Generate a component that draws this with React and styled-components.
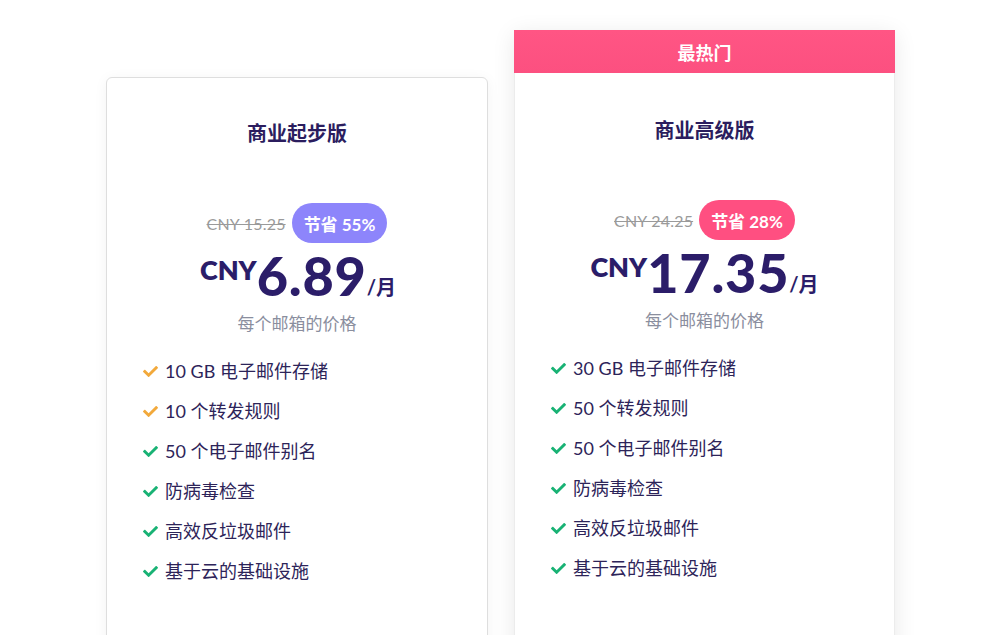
import React from "react";
import styled, { createGlobalStyle } from "styled-components";
import { FaCheck } from "react-icons/fa";

const GlobalStyle = createGlobalStyle`
  html, body {
    margin: 0;
    padding: 0;
    background: #ffffff;
    overflow: hidden;
  }
  body {
    font-family: "Lato", "Noto Sans CJK SC", sans-serif;
  }
`;

const Page = styled.div`
  display: flex;
  align-items: flex-start;
  gap: 26px;
  padding: 30px 0 0 106px;
  height: 605px;
  overflow: hidden;
`;

const Column = styled.div`
  width: ${(p) => p.$width}px;
  margin-top: ${(p) => (p.$popular ? 0 : 47)}px;
  box-shadow: ${(p) =>
    p.$popular ? "0 4px 22px rgba(0, 0, 0, 0.09)" : "0 2px 14px rgba(0, 0, 0, 0.05)"};
  border-radius: ${(p) => (p.$popular ? "0" : "6px")};
`;

const Banner = styled.div`
  height: 43px;
  display: flex;
  align-items: center;
  justify-content: center;
  background: linear-gradient(180deg, #ff5584 0%, #fc5080 100%);
  color: #fff;
  font-weight: 700;
  font-size: 18px;
  font-family: "Noto Sans CJK SC", sans-serif;
`;

const Card = styled.div`
  background: #fff;
  border: 1px solid ${(p) => (p.$popular ? "#ececec" : "#dedede")};
  border-top: ${(p) => (p.$popular ? "none" : "1px solid #dedede")};
  border-radius: ${(p) => (p.$popular ? "0" : "6px")};
  height: 640px;
  display: flex;
  flex-direction: column;
  align-items: center;
  padding-top: ${(p) => (p.$popular ? 42 : 40)}px;
  box-sizing: border-box;
`;

const Title = styled.h2`
  margin: 0;
  font-family: "Noto Sans CJK SC", sans-serif;
  font-size: 20px;
  font-weight: 700;
  color: #2b1d5e;
  line-height: 30px;
`;

const OldRow = styled.div`
  margin-top: 55px;
  display: flex;
  align-items: center;
  gap: 6px;
`;

const OldPrice = styled.span`
  font-size: 16px;
  color: #9a9a9a;
  text-decoration: line-through;
  letter-spacing: 0.2px;
`;

const Badge = styled.span`
  background: ${(p) => p.$color};
  color: #fff;
  font-weight: 700;
  font-size: 17px;
  height: 40px;
  padding: 0 12px;
  border-radius: 20px;
  display: inline-flex;
  align-items: center;
  font-family: "Lato", "Noto Sans CJK SC", sans-serif;
`;

const PriceRow = styled.div`
  display: flex;
  align-items: flex-end;
  color: #2b1d69;
  font-weight: 800;
  margin-top: 6px;
  margin-left: ${(p) => p.$shift}px;
`;

const Currency = styled.span`
  font-size: 27px;
  font-weight: 800;
  align-self: flex-start;
  line-height: 32px;
  margin-top: 5px;
`;

const Amount = styled.span`
  font-size: 54px;
  font-weight: 900;
  line-height: 54px;
  letter-spacing: 0.8px;
`;

const Per = styled.span`
  font-size: 20px;
  font-weight: 700;
  font-family: "Lato", "Noto Sans CJK SC", sans-serif;
  line-height: 24px;
  margin-bottom: 4px;
`;

const Caption = styled.div`
  margin-top: 7px;
  font-size: 17px;
  color: #8a8e9e;
  font-family: "Noto Sans CJK SC", sans-serif;
`;

const Features = styled.ul`
  list-style: none;
  margin: 24px 0 0;
  padding: 0 0 0 36px;
  align-self: stretch;
  display: flex;
  flex-direction: column;
  gap: 16px;
`;

const Feature = styled.li`
  display: flex;
  align-items: center;
  gap: 7px;
  font-size: 18px;
  line-height: 24px;
  color: #2d2459;
  font-family: "Lato", "Noto Sans CJK SC", sans-serif;

  svg {
    color: ${(p) => (p.$warn ? "#f2a93b" : "#18b274")};
    width: 15px;
    height: 15px;
    flex-shrink: 0;
  }
`;

const plans = [
  {
    name: "商业起步版",
    old: "CNY 15.25",
    save: "节省 55%",
    badge: "#8d85fb",
    amount: "6.89",
    width: 382,
    shift: 2,
    features: [
      { text: "10 GB 电子邮件存储", warn: true },
      { text: "10 个转发规则", warn: true },
      { text: "50 个电子邮件别名" },
      { text: "防病毒检查" },
      { text: "高效反垃圾邮件" },
      { text: "基于云的基础设施" },
    ],
  },
  {
    name: "商业高级版",
    old: "CNY 24.25",
    save: "节省 28%",
    badge: "#ff4f81",
    amount: "17.35",
    width: 381,
    shift: 0,
    popular: true,
    features: [
      { text: "30 GB 电子邮件存储" },
      { text: "50 个转发规则" },
      { text: "50 个电子邮件别名" },
      { text: "防病毒检查" },
      { text: "高效反垃圾邮件" },
      { text: "基于云的基础设施" },
    ],
  },
];

export default function App() {
  return (
    <>
      <GlobalStyle />
      <Page>
        {plans.map((plan) => (
          <Column key={plan.name} $width={plan.width} $popular={plan.popular}>
            {plan.popular && <Banner>最热门</Banner>}
            <Card $popular={plan.popular}>
              <Title>{plan.name}</Title>
              <OldRow>
                <OldPrice>{plan.old}</OldPrice>
                <Badge $color={plan.badge}>{plan.save}</Badge>
              </OldRow>
              <PriceRow $shift={plan.shift}>
                <Currency>CNY</Currency>
                <Amount>{plan.amount}</Amount>
                <Per>/月</Per>
              </PriceRow>
              <Caption>每个邮箱的价格</Caption>
              <Features>
                {plan.features.map((f) => (
                  <Feature key={f.text} $warn={f.warn}>
                    <FaCheck />
                    {f.text}
                  </Feature>
                ))}
              </Features>
            </Card>
          </Column>
        ))}
      </Page>
    </>
  );
}
